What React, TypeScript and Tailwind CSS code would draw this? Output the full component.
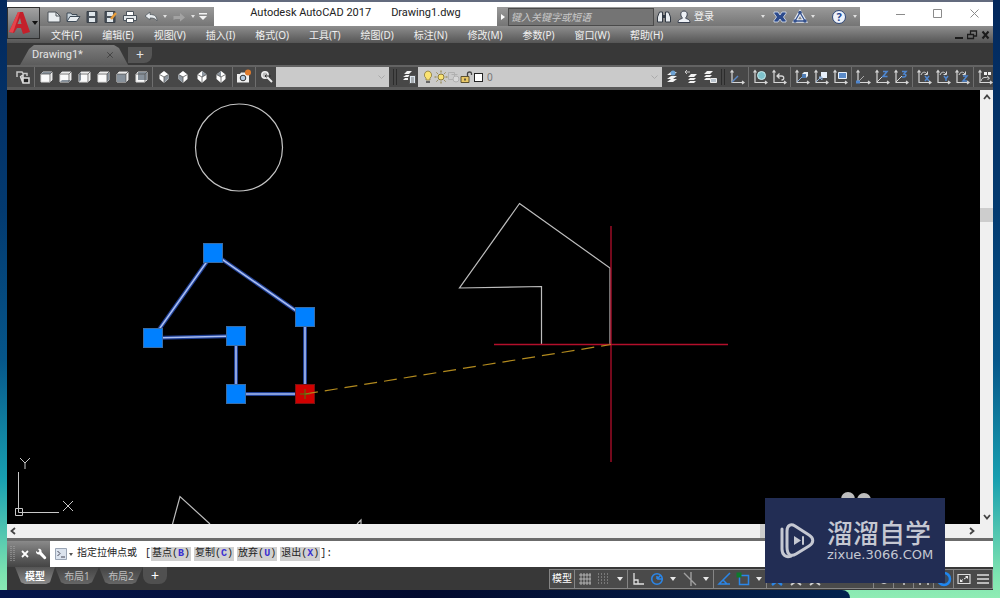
import React from 'react'
import { FiX } from 'react-icons/fi';

interface iconProps {
    children: React.ReactNode;
    className?: string;
}

const Icon: React.FC<iconProps> = ({ children, className }) => (
    <svg width="16" height="16" viewBox="0 0 16 16" fill="none" aria-hidden="true" className={className ?? "shrink-0"}>
        {children}
    </svg>
)

interface toolProps {
    label: string;
    children: React.ReactNode;
}

const Tool: React.FC<toolProps> = ({ label, children }) => (
    <button type="button" aria-label={label} className="flex h-full w-[19px] shrink-0 items-center justify-center">
        <Icon>{children}</Icon>
    </button>
)

const Sep = () => (
    <span className="flex h-full w-1 shrink-0 justify-center">
        <span className="h-full w-px bg-[#6e6e6e]" />
    </span>
)

const Grip = () => (
    <span className="flex h-full w-2 shrink-0 justify-center gap-0.5 py-0.5">
        <span className="w-px bg-[#2c2c2c]" />
        <span className="w-px bg-[#2c2c2c]" />
    </span>
)

const Caret = () => (
    <svg width="6" height="4" viewBox="0 0 6 4" aria-hidden="true" className="shrink-0">
        <path d="M0 0h6L3 4z" fill="#e8e8e8" />
    </svg>
)

const SmallCaret = () => (
    <svg width="6" height="3" viewBox="0 0 6 3" aria-hidden="true" className="shrink-0">
        <path d="M1 0h4L3 3z" fill="#e0e0e0" />
    </svg>
)

const Chevron = ({ d }: { d: string }) => (
    <svg width="8" height="8" viewBox="0 0 8 8" fill="none" aria-hidden="true">
        <path d={d} stroke="#444" strokeWidth="1.8" />
    </svg>
)

const menus = ["文件(F)", "编辑(E)", "视图(V)", "插入(I)", "格式(O)", "工具(T)", "绘图(D)", "标注(N)", "修改(M)", "参数(P)", "窗口(W)", "帮助(H)"];

const cubes = [
    { label: "俯视", face: "M3 5l2-2h9l-2 2z" },
    { label: "仰视", face: "M3 13l2-2h9l-2 2z" },
    { label: "左视", face: "M3 5l2-2v8l-2 2z" },
    { label: "右视", face: "M12 5l2-2v8l-2 2z" },
    { label: "前视", face: "M3 5h9v8H3z" },
    { label: "后视", face: "M5 3h9v8H5z" },
];

const isoViews = [
    { label: "西南等轴测", shade: "M8 8l4.500-2.500v4L8 14z" },
    { label: "东南等轴测", shade: "M3.500 5.500L8 8v6l-4.500-4z" },
    { label: "东北等轴测", shade: "M8 2l4.500 3.500L8 8z" },
    { label: "西北等轴测", shade: "M8 2L3.500 5.500 8 8z" },
];

const axisColor = "#d6d6d6";

const Axes = () => (
    <path d="M3 1.500V13.500H15M1.500 3.500L3 1.500l1.500 2M13 12l2 1.500-2 1.500" stroke={axisColor} strokeWidth="1.200" />
)

const rotations = [
    { label: "绕 X 轴旋转", d: "M9 7l4 5M13 7l-4 5" },
    { label: "绕 Y 轴旋转", d: "M9 7l2 2.500L13 7M11 9.500V12" },
    { label: "绕 Z 轴旋转", d: "M9 7h4l-4 5h4" },
];

const commandOptions = [
    { name: "基点", k: "B" },
    { name: "复制", k: "C" },
    { name: "放弃", k: "U" },
    { name: "退出", k: "X" },
];

// the shape being stretched, in drawing area pixels
const grips = [[206, 163], [298, 227], [298, 304], [229, 304], [229, 246], [146, 248]];

const TitleBar = () => (
    <div className="flex h-6 bg-white">
        <div className="mt-[5px] flex w-[174px] shrink-0 items-center gap-[3px] bg-linear-to-b from-[#9a9a9a] to-[#757575] pl-1.5">
            <button type="button" aria-label="新建">
                <Icon><path d="M2 3h8l4 4v6H2z" fill="#e9edf0" stroke="#4d5359" /><path d="M10 3v4h4" stroke="#4d5359" /></Icon>
            </button>
            <button type="button" aria-label="打开">
                <Icon><path d="M2 12V4h4l1 1.500h5V8" fill="#c9d4dc" stroke="#3f4b57" /><path d="M2 12.500L5 7.500h10l-3.500 5z" fill="#e9eef2" stroke="#3f4b57" /></Icon>
            </button>
            <button type="button" aria-label="保存">
                <Icon><path d="M3 2.500h10v11H3z" fill="#4b535c" stroke="#3a4149" /><path d="M5 3h6v4H5zM5 9h6v4H5z" fill="#dfe6eb" /></Icon>
            </button>
            <button type="button" aria-label="另存为">
                <Icon><path d="M2 2.500h10v11H2z" fill="#4b535c" stroke="#3a4149" /><path d="M4 3h6v4H4zM4 9h6v4H4z" fill="#dfe6eb" /><path d="M8 10l5-6" stroke="#e69b3a" strokeWidth="2.500" /></Icon>
            </button>
            <button type="button" aria-label="打印">
                <Icon><path d="M4.500 2.500h7V7h-7z" fill="#fff" stroke="#4b535c" /><path d="M1.500 6.500h13v5h-13z" fill="#e4e8eb" stroke="#4b535c" /><path d="M4.500 9.500h7v4h-7z" fill="#fff" stroke="#4b535c" /></Icon>
            </button>
            <button type="button" aria-label="放弃" className="ml-0.5">
                <Icon><path d="M2 7l5-4v2.500c5 0 7 2 7 6.500-1.500-2.500-3.500-3-7-3V11z" fill="#e9edf0" stroke="#535a61" strokeWidth=".8" /></Icon>
            </button>
            <SmallCaret />
            <button type="button" aria-label="重做">
                <Icon><path d="M2.500 11V7H9V4l5 4.500L9 12.500V10H6c-1.500 0-2.500 0-3.500 1z" fill="#a3a3a3" /></Icon>
            </button>
            <SmallCaret />
            <button type="button" aria-label="自定义快速访问工具栏">
                <svg width="8" height="8" viewBox="0 0 8 8" aria-hidden="true"><path d="M0 0h8v1.500H0zM0 3h8L4 7z" fill="#f2f2f2" /></svg>
            </button>
        </div>

        <h1 className="mt-[3px] flex flex-1 items-start justify-center gap-5 font-['Roboto',sans-serif] text-[11px] leading-4 whitespace-nowrap text-[#222]">
            <span>Autodesk AutoCAD 2017</span>
            <span>Drawing1.dwg</span>
        </h1>

        <div className="mt-[5px] flex w-[363px] shrink-0 items-center bg-linear-to-b from-[#9a9a9a] to-[#757575]">
            <button type="button" aria-label="收拢" className="flex w-[11px] justify-center">
                <svg width="4" height="6" viewBox="0 0 4 6" aria-hidden="true"><path d="M0 0v6l4-3z" fill="#fff" /></svg>
            </button>
            <input
                type="text"
                aria-label="搜索"
                placeholder="键入关键字或短语"
                className="h-[18px] w-[146px] border border-[#4a4a4a] bg-[#747474] px-0.5 text-[10px] italic placeholder:text-[#c9c9c9]"
            />
            <button type="button" aria-label="查找" className="ml-0.5">
                <Icon><path d="M3.500 3h3v10h-5V8zM12.500 3h-3v10h5V8z" fill="#e8ecf0" stroke="#333a44" /><path d="M6.500 6h3v3h-3z" fill="#333a44" /></Icon>
            </button>
            <button type="button" className="ml-1 flex items-center gap-0.5 text-[10px] text-[#f2f2f2]">
                <Icon><path d="M8 2c4 0 4 5 1.500 7 0 1 4.500.5 4.500 4.500H2C2 9.500 6.500 10 6.500 9 4 7 4 2 8 2z" fill="#eef1f6" stroke="#3a4150" /></Icon>
                登录
            </button>
            <span className="ml-auto"><SmallCaret /></span>
            <button type="button" aria-label="Exchange" className="ml-1.5">
                <Icon><path d="M2 3h4l2 3 2-3h4v1.500L11.500 8l2.500 3.500V13h-4l-2-3-2 3H2v-1.500L4.500 8 2 4.500z" fill="#2c4a8c" stroke="#dce4f2" strokeWidth=".8" /></Icon>
            </button>
            <button type="button" aria-label="A360" className="mr-0.5 ml-1">
                <Icon><path d="M8 3.500L3 12h10z" stroke="#e6ebf5" strokeWidth="3.500" /><path d="M8 3.500L3 12h10z" stroke="#33508c" strokeWidth="1.300" /><circle cx="8" cy="3.500" r="1.800" fill="#33508c" /><circle cx="3" cy="12" r="1.800" fill="#33508c" /><circle cx="13" cy="12" r="1.800" fill="#33508c" /></Icon>
            </button>
            <SmallCaret />
            <button type="button" aria-label="帮助" className="mr-1.5 ml-4 flex size-[14px] items-center justify-center rounded-full border border-[#2f4878] bg-[#eef2fb] text-[11px] leading-3 font-bold text-[#23458f]">?</button>
            <span className="mr-0.5"><SmallCaret /></span>
        </div>

        <div className="ml-[22px] flex shrink-0 items-center text-[#8b8b8b]">
            <button type="button" aria-label="最小化" className="flex w-[37px] justify-center">
                <svg width="10" height="10" aria-hidden="true"><path d="M0 5.500h9" stroke="currentColor" /></svg>
            </button>
            <button type="button" aria-label="最大化" className="flex w-[37px] justify-center">
                <svg width="10" height="10" fill="none" aria-hidden="true"><path d="M.5.5h8v8h-8z" stroke="currentColor" /></svg>
            </button>
            <button type="button" aria-label="关闭" className="flex w-[37px] justify-center">
                <svg width="10" height="10" aria-hidden="true"><path d="M.5.5l8 8M8.500.5l-8 8" stroke="currentColor" /></svg>
            </button>
        </div>
    </div>
)

const MenuBar = () => (
    <nav className="flex h-[17px] items-center pl-[11px] text-[10px] leading-4 text-[#f0f0f0]">
        <div className="flex gap-5">
            {menus.map((m) => (
                <button type="button" key={m} className="whitespace-nowrap">{m}</button>
            ))}
        </div>
        <div className="mr-[3px] ml-auto flex items-center gap-[3px] text-[#1c1c1c]">
            <button type="button" aria-label="最小化图形">
                <svg width="10" height="10" aria-hidden="true"><path d="M1 8h8" stroke="currentColor" strokeWidth="2" /></svg>
            </button>
            <button type="button" aria-label="还原图形">
                <svg width="11" height="10" fill="none" aria-hidden="true"><path d="M.5 4.500h6v4h-6zM3.500 4V1h6v5H7" stroke="currentColor" strokeWidth="1.300" /></svg>
            </button>
            <button type="button" aria-label="关闭图形">
                <svg width="9" height="10" aria-hidden="true"><path d="M1.500 1.500l6 7M7.500 1.500l-6 7" stroke="currentColor" strokeWidth="2" /></svg>
            </button>
        </div>
    </nav>
)

const Toolbar = () => (
    <div className="flex h-[25px] overflow-hidden border-t-2 border-b-3 border-t-[#636363] border-b-[#595959] bg-[#474747] pl-1.5">
        <Tool label="视图管理器">
            <path d="M2 8V3h5l1 1.500h4V7" stroke="#c8c8c8" strokeWidth="1.500" />
            <path d="M5 8l3-2v8M6 9h8v5H8z" stroke="#dcdcdc" strokeWidth="1.500" />
            <path d="M9 10h4v3H9z" fill="#222" />
        </Tool>
        <Sep />
        {cubes.map((c) => (
            <Tool key={c.label} label={c.label}>
                <path d="M3 5l2-2h9v8l-2 2H3z" fill="#fafafa" stroke="#ddd" />
                <path d={c.face} fill="#87919b" />
                <path d="M3 5h9v8M12 5l2-2" stroke="#555" strokeWidth=".8" />
            </Tool>
        ))}
        <Sep />
        {isoViews.map((v) => (
            <Tool key={v.label} label={v.label}>
                <path d="M8 2l4.500 3.500v4.500L8 14l-4.500-4V5.500z" fill="#fff" />
                <path d={v.shade} fill="#8c959e" />
                <path d="M3.500 5.500L8 8l4.500-2.500M8 8v6" stroke="#555" strokeWidth=".8" />
            </Tool>
        ))}
        <Sep />
        <Tool label="创建相机">
            <path d="M1 5h3l1-1.500h4L10 5h3v8.500H1z" fill="#f0f0f0" />
            <circle cx="7" cy="9" r="2.800" fill="#b7cbe0" stroke="#333" />
            <circle cx="12" cy="3.500" r="3" fill="#e07b2c" />
        </Tool>
        <Sep />
        <Tool label="缩放上一个">
            <circle cx="6" cy="6" r="3.200" fill="#bbb" stroke="#eee" strokeWidth="1.500" />
            <path d="M8 8l5 5" stroke="#eee" strokeWidth="2" />
            <path d="M6 7h6M7.500 5.500L6 7l1.500 1.500" stroke="#333" />
        </Tool>
        <div className="relative w-[113px] shrink-0">
            <select aria-label="视图" className="size-full appearance-none bg-[#cacaca]" defaultValue="">
                <option value=""></option>
            </select>
            <svg width="7" height="5" fill="none" aria-hidden="true" className="pointer-events-none absolute top-2 right-1"><path d="M.5.5l3 3 3-3" stroke="#aaa" /></svg>
        </div>
        <span className="w-0.5 shrink-0" />
        <Grip />
        <Tool label="图层特性管理器">
            <path d="M3 5l3-3h5L8 5zM2 8l3-2h4L7 8zM2 11l2-2h3v2z" fill="#f2f2f2" />
            <path d="M8.500 6.500h6v8h-6z" fill="#dce6ef" stroke="#555" />
            <path d="M10 9h3M10 11h3M10 13h3" stroke="#555" strokeWidth=".8" />
        </Tool>
        <div className="flex w-[244px] shrink-0 items-center bg-[#cacaca] pl-0.5">
            <Icon className="-mr-[3px] shrink-0">
                <path d="M8 2a4 4 0 0 1 2 7.200V11H6V9.200A4 4 0 0 1 8 2z" fill="#fbe372" stroke="#8a7a3a" strokeWidth=".8" />
                <path d="M6 12h4v2H6z" fill="#666" />
            </Icon>
            <Icon className="-mr-[3px] shrink-0">
                <circle cx="8" cy="8" r="3" fill="#fbe372" stroke="#8a7a3a" />
                <path d="M8 1.500v2M8 12.500v2M1.500 8h2M12.500 8h2M3.500 3.500l1.200 1.200M11.300 11.300l1.200 1.200M12.500 3.500l-1.200 1.200M4.700 11.300l-1.200 1.200" stroke="#8a7a3a" />
            </Icon>
            <Icon className="-mr-[3px] shrink-0">
                <path d="M2.500 3.500h6v7h-6zM5.500 5.500h6" stroke="#b0b0b0" />
                <circle cx="10" cy="10" r="3" fill="#d8d8d8" stroke="#b0b0b0" />
            </Icon>
            <Icon className="-mr-[3px] shrink-0">
                <path d="M2 7.500h8v6H2z" fill="#e9c765" stroke="#5c5230" />
                <path d="M8.500 7V4.500c0-2 4-2 4 0V6" stroke="#444" strokeWidth="1.300" />
                <path d="M6 9.500v2" stroke="#333" strokeWidth="1.500" />
            </Icon>
            <span className="mx-0.5 size-[9px] shrink-0 border border-[#222] bg-white" />
            <div className="relative flex h-full flex-1">
                <select aria-label="图层" className="size-full appearance-none pl-0.5 text-[10px] leading-4 text-[#777]">
                    <option>0</option>
                </select>
                <svg width="7" height="5" fill="none" aria-hidden="true" className="pointer-events-none absolute top-2 right-1"><path d="M.5.5l3 3 3-3" stroke="#aaa" /></svg>
            </div>
        </div>
        <Tool label="将对象的图层置为当前">
            <path d="M3 6l4-3h6l-4 3zM3 10l4-3h6l-4 3zM3 13l4-3h6l-4 3z" fill="#f2f2f2" />
            <circle cx="9" cy="4" r="2.500" fill="#6ea3d4" />
        </Tool>
        <Tool label="上一个图层">
            <path d="M5 8l3-3h6l-3 3zM5 11l2-2h6l-2 2zM5 14l2-2h6l-2 2z" fill="#f2f2f2" />
            <path d="M2 3h5M4 1L2 3l2 2" stroke="#c8c8c8" />
        </Tool>
        <Tool label="图层状态管理器">
            <path d="M2 5l3-3h6L8 5zM2 8l2-2h6L8 8zM2 11l2-2h4v2z" fill="#f2f2f2" />
            <path d="M8.500 9.500h6v4h-6z" fill="#b8c2cc" stroke="#eee" />
        </Tool>
        <Grip />
        <Tool label="UCS"><Axes /><path d="M3 13L9 7" stroke="#5b87c4" strokeWidth="1.500" /></Tool>
        <Sep />
        <Tool label="世界"><Axes /><circle cx="9.500" cy="6.500" r="4" fill="#7fc3cc" stroke="#c8ecee" /></Tool>
        <Tool label="上一个 UCS"><Axes /><path d="M6 7h4.500c3 0 3 4 0 4M8.500 4.500L6 7l2.500 2.500" stroke={axisColor} strokeWidth="1.300" /></Tool>
        <Sep />
        <Tool label="面 UCS"><Axes /><path d="M8 5l2-2h4v4l-2 2H8z" fill="#e8eef4" /><path d="M8 5h4v4H8z" fill="#4f7db5" /><path d="M3 13l5-5" stroke="#8fb0d8" /></Tool>
        <Tool label="对象"><Axes /><path d="M8 3h6v6H8z" fill="#e8f0fa" /><path d="M3 13l5-5M6 8h3v3z" stroke="#8fb0d8" /></Tool>
        <Tool label="视图 UCS"><Axes /><path d="M6.500 3.500h8v6h-8z" fill="#5b8bc9" stroke="#e8f0fa" /></Tool>
        <Sep />
        <Tool label="原点"><Axes /><path d="M3 13l6-6" stroke="#aaa" /><path d="M1 11.500h4v3H1z" fill="#4f86cf" /></Tool>
        <Tool label="Z 轴矢量"><Axes /><path d="M3 13l6-6" stroke={axisColor} /><path d="M9 2.500h4l-4 5h4.500" stroke="#4f86cf" strokeWidth="1.600" /></Tool>
        <Tool label="三点"><Axes /><path d="M3 13l6-6" stroke={axisColor} /><path d="M9 2.500h4L11 5c3 0 2.500 3.500-2 3" stroke="#4f86cf" strokeWidth="1.600" /></Tool>
        <Sep />
        {rotations.map((r) => (
            <Tool key={r.label} label={r.label}>
                <Axes />
                <path d="M5 6c1-3 4-4 6-1M11.500 2.500V5.500H8.500" stroke={axisColor} />
                <path d={r.d} stroke="#4f86cf" strokeWidth="1.500" />
            </Tool>
        ))}
        <Sep />
        <Tool label="应用"><Axes /><path d="M7 3h3v3H7zM11 3h3v3h-3z" fill="#eee" /><path d="M4 12c1-4 4-4 8-3M10 7l2.500 2-2 2" stroke={axisColor} /></Tool>
    </div>
)

const DrawingArea = () => (
    <main className="relative min-w-0 flex-1 bg-black">
        <svg className="absolute inset-0 size-full" fill="none" aria-label="图形">
            <circle cx="232" cy="57.500" r="43.500" stroke="#c4c4c4" strokeWidth="1.200" />

            <path d="M512.500 113.500L603 178V254.500H534.500V196.500L452.500 198z" stroke="#bdbdbd" strokeWidth="1.200" />
            <path d="M165 436L173 406.500 203 434M350 434l4-4v4" stroke="#bdbdbd" strokeWidth="1.200" />
            <path d="M487 254.500H721M604 136V372" stroke="#b30f2b" strokeWidth="1.300" />

            <path d="M206 163L298 227V304H229V246L146 248z" stroke="#1f3f94" strokeWidth="4" />
            <path d="M206 163L298 227V304H229V246L146 248z" stroke="#a9bdf0" strokeWidth="1.600" />
            {grips.map(([x, y], i) => (
                <rect key={i} x={x - 9.5} y={y - 9.5} width="19" height="19" fill={i === 2 ? "#d00000" : "#0080ff"} stroke={i === 2 ? "#7a1010" : "#3a6ea8"} />
            ))}
            <path d="M298 304L604 254.500" stroke="#b28a1e" strokeWidth="1.200" strokeDasharray="13 7" />
            <path d="M293 304h10M298 299v10" stroke="#4a7a10" />

            <circle cx="841" cy="409" r="7" fill="#bdbdbd" />
            <circle cx="857" cy="410" r="7" fill="#bdbdbd" />
        </svg>
        <svg width="72" height="70" fill="none" stroke="#c8c8c8" aria-hidden="true" className="absolute bottom-0 left-0">
            <path d="M8.500 54.500h7v7h-7zM11.500 18v40.500H52M13 4l5 5 5-5M18 9v6M56 47l10 10M66 47L56 57" />
        </svg>
    </main>
)

const Watermark = () => (
    <aside className="absolute right-[55px] bottom-[15px] flex h-[85px] w-[180px] items-center gap-2.5 bg-[#222d54] pl-3.5 text-[#c5c8d2]">
        <svg width="38" height="38" viewBox="0 0 38 38" fill="none" stroke="currentColor" strokeWidth="3" strokeLinecap="round" aria-hidden="true" className="shrink-0">
            <path d="M3 7v20c0 6 4 9 9 7" />
            <path d="M8 25V9c0-6 4-7.500 8-5l14 9c5 3 5 8 0 11l-13 8c-5 3-9 1-9-7z" />
            <path d="M15 14v9l7-4.500z" fill="currentColor" stroke="none" />
            <path d="M24 15v7" strokeWidth="2" />
        </svg>
        <div>
            <p className="text-[26px] leading-7 font-medium whitespace-nowrap">溜溜自学</p>
            <p className="font-['DejaVu_Sans',sans-serif] text-[13px] leading-4">zixue.3066.COM</p>
        </div>
    </aside>
)

const StatusSep = () => <span className="h-full w-px shrink-0 bg-[#858585]" />

const StatusBar = () => (
    <div className="flex h-5 w-[444px] shrink-0 items-center border border-[#858585] bg-[#4a4a4a]">
        <button type="button" className="w-6 text-[10px] whitespace-nowrap text-white">模型</button>
        <StatusSep />
        <Tool label="栅格"><path d="M4 2v12M7 2v12M10 2v12M13 2v12M2 4h12M2 8h12M2 12h12" stroke="#c9c9c9" strokeWidth=".8" /></Tool>
        <Tool label="捕捉"><path d="M2 3h12M2 6h12M2 9h12M2 12h12" stroke="#a8a8a8" strokeDasharray="1 2" /></Tool>
        <button type="button" aria-label="捕捉设置" className="flex w-[14px] justify-center"><Caret /></button>
        <StatusSep />
        <Tool label="正交"><path d="M4 2v11h10M4 9h4v4" stroke="#e0e0e0" strokeWidth="1.300" /></Tool>
        <Tool label="极轴追踪"><circle cx="8" cy="8" r="5.300" stroke="#2b86e8" strokeWidth="1.600" /><path d="M8 8h6M8 8l4-4M8 5v3" stroke="#2b86e8" strokeWidth="1.500" /></Tool>
        <button type="button" aria-label="极轴设置" className="flex w-[14px] justify-center"><Caret /></button>
        <Tool label="等轴测草图"><path d="M2 2l12 12M9 1v14" stroke="#a0a0a0" strokeWidth="1.400" /></Tool>
        <button type="button" aria-label="等轴测设置" className="flex w-[14px] justify-center"><Caret /></button>
        <StatusSep />
        <Tool label="对象捕捉追踪"><path d="M14 2L3 13h11M7 9l4 4" stroke="#2b86e8" strokeWidth="1.500" /></Tool>
        <Tool label="对象捕捉"><path d="M4.500 4.500h9v9h-9z" stroke="#2b86e8" strokeWidth="1.500" /><path d="M1.500 1.500h5v5h-5z" fill="#0d7a2c" /></Tool>
        <button type="button" aria-label="对象捕捉设置" className="flex w-[14px] justify-center"><Caret /></button>
        <StatusSep />
        <Tool label="注释可见性"><path d="M8 2v8L3 14M8 10l5 4" stroke="#2b86e8" strokeWidth="2.500" /></Tool>
        <Tool label="自动缩放"><path d="M8 2v8L3 14M8 10l5 4" stroke="#d0d0d0" strokeWidth="2" /></Tool>
        <Tool label="注释比例"><path d="M8 2v8L3 14M8 10l5 4" stroke="#d0d0d0" strokeWidth="2" /></Tool>
        <span className="flex-1" />
        <StatusSep />
        <Tool label="切换工作空间"><circle cx="8" cy="8" r="4" stroke="#d0d0d0" strokeWidth="2" /></Tool>
        <StatusSep />
        <Tool label="注释监视器"><path d="M8 2v12M2 8h12" stroke="#d0d0d0" strokeWidth="1.500" /></Tool>
        <StatusSep />
        <Tool label="隔离对象"><path d="M4 14V4h8v10" stroke="#d0d0d0" strokeWidth="1.500" /></Tool>
        <StatusSep />
        <Tool label="硬件加速"><circle cx="8" cy="8" r="6" fill="#3a4a60" stroke="#1f86f0" strokeWidth="2.500" /></Tool>
        <StatusSep />
        <Tool label="全屏显示"><path d="M2 3.500h12v9H2z" stroke="#ddd" strokeWidth="1.200" /><path d="M9 5h3v3zM4 8v3h3z" fill="#eee" /><path d="M8 8l3-2M5 10l2-1.500" stroke="#eee" /></Tool>
        <Tool label="自定义"><path d="M2 4h12M2 8h12M2 12h12" stroke="#e0e0e0" strokeWidth="1.500" /></Tool>
    </div>
)

export default function App() {
    return (
        <div className="relative flex min-h-screen flex-col bg-[linear-gradient(to_bottom,#03285c_0%,#033a70_35%,#06568a_60%,#189fb0_80%,#7de3b0_96%,#8fecb4_100%)] pr-[7px] pb-2 pl-[7px] font-['Noto_Sans','Noto_Sans_CJK_SC',sans-serif]">
            {/* desktop strip under the window */}
            <div className="absolute right-0 bottom-0 left-0 flex h-2">
                <span className="w-[85%] rounded-tr-full bg-linear-to-r from-[#04154a] via-[#020a2e] to-[#03234f]" />
            </div>

            <header className="flex border-t-2 border-[#636b7e] bg-[linear-gradient(to_bottom,#fff_24px,#8e8e8e_24px,#555_41px)]">
                <button type="button" aria-label="应用程序菜单" className="mt-[5px] flex h-8 w-[33px] shrink-0 items-center justify-center gap-px border border-[#2f2f2f] bg-linear-to-b from-[#a2a2a2] to-[#5f6264]">
                    <svg width="22" height="24" viewBox="0 0 22 24" aria-hidden="true">
                        <path d="M9 1h5l7 20-7 2-2-6H8l-3 5-5-1zM11 7l-2.500 6h4z" fillRule="evenodd" fill="#c4202b" />
                        <path d="M9 1h2L4 21.800l-4-.8z" fill="#e5434b" />
                    </svg>
                    <svg width="6" height="4" aria-hidden="true"><path d="M0 0h6L3 4z" fill="#111" /></svg>
                </button>
                <div className="min-w-0 flex-1">
                    <TitleBar />
                    <MenuBar />
                </div>
            </header>

            <div className="flex h-[22px] items-end bg-[#383838] pl-[13px] text-[#e4e4e4]">
                <div className="flex h-5 w-[108px] items-center bg-linear-to-b from-[#7c7c7c] to-[#5c5c5c] pl-3 [clip-path:polygon(0_100%,9px_4px,14px_0,94px_0,99px_3px,108px_100%)]">
                    <button type="button" className="font-['Roboto',sans-serif] text-[11px] leading-4">Drawing1*</button>
                    <button type="button" aria-label="关闭选项卡" className="mr-[13px] ml-auto text-[10px] text-[#3c3c3c]"><FiX /></button>
                </div>
                <button type="button" aria-label="新图形" className="mb-0.5 flex h-4 w-6 items-center justify-center rounded-br-lg bg-[#555] text-[14px] leading-4">+</button>
            </div>

            <Toolbar />

            <div className="flex min-h-[300px] flex-1">
                <DrawingArea />
                <div className="flex w-[13px] shrink-0 flex-col bg-[#f0f0f0]">
                    <button type="button" aria-label="向上滚动" className="flex h-[14px] items-center justify-center"><Chevron d="M1 6l3-3.500L7 6" /></button>
                    <span className="flex-[104]" />
                    <span className="h-[14px] bg-[#cdcdcd]" />
                    <span className="flex-[288]" />
                    <button type="button" aria-label="向下滚动" className="flex h-[14px] items-center justify-center"><Chevron d="M1 2l3 3.500L7 2" /></button>
                </div>
            </div>
            <div className="flex h-[14px] bg-[#f0f0f0]">
                <button type="button" aria-label="向左滚动" className="flex w-3 items-center justify-center"><Chevron d="M6 1L2.500 4 6 7" /></button>
                <span className="flex-[741]" />
                <span className="w-[110px] bg-[#cdcdcd]" />
                <span className="flex-[94]" />
                <button type="button" aria-label="向右滚动" className="mr-[13px] flex w-4 items-center justify-center"><Chevron d="M2 1l3.500 3L2 7" /></button>
            </div>

            <div className="flex h-[29px] border-t-3 border-[#6b6b6b] bg-white">
                <div className="flex w-[43px] items-center gap-1.5 bg-linear-to-b from-[#8a8a8a] to-[#444] pl-[3px]">
                    <svg width="5" height="16" aria-hidden="true"><path d="M1 0v16M4 0v16" stroke="#aaa" strokeDasharray="1 1" /></svg>
                    <button type="button" aria-label="关闭命令行">
                        <svg width="8" height="8" aria-hidden="true"><path d="M1 1l6 6M7 1L1 7" stroke="#fff" strokeWidth="1.800" /></svg>
                    </button>
                    <button type="button" aria-label="自定义命令行">
                        <svg width="12" height="12" viewBox="0 0 12 12" aria-hidden="true"><path d="M1 3l2 1.500L4.500 3 3 1c2-1 4 .5 3.500 3L11 9c1 1-1 3-2 2L4.500 6.500C2.500 7 .5 5 1 3z" fill="#fff" /></svg>
                    </button>
                </div>
                <div className="flex flex-1 items-center pl-[5px] font-['Liberation_Mono','Noto_Sans_CJK_SC',monospace] text-[10px] leading-4 whitespace-nowrap text-[#222]">
                    <button type="button" aria-label="最近使用的命令" className="mr-1 flex items-center gap-0.5">
                        <svg width="12" height="12" fill="none" aria-hidden="true"><path d="M.5.5h11v11H.5z" fill="#dbe3ee" stroke="#9aa5b5" /><path d="M2.500 3L5 5.500 2.500 8M6 9h4" stroke="#445" /></svg>
                        <svg width="4" height="3" aria-hidden="true"><path d="M0 0h4L2 3z" fill="#555" /></svg>
                    </button>
                    <span>指定拉伸点或</span>
                    <span className="ml-2">[</span>
                    <span className="flex gap-[3px]">
                        {commandOptions.map((o) => (
                            <button type="button" key={o.k} className="bg-[#d0d0d0] px-px leading-[14px]">
                                {o.name}(<span className="font-bold text-[#3a2fd0]">{o.k}</span>)
                            </button>
                        ))}
                    </span>
                    <span>]:</span>
                </div>
            </div>

            <footer className="flex h-[23px] items-center justify-between bg-[#383838]">
                <div className="flex h-full items-start pl-2 text-[10px] leading-4 text-[#bdbdbd]">
                    <button type="button" className="h-[17px] w-10 bg-linear-to-b from-[#555] to-[#8c8c8c] font-bold text-white [clip-path:polygon(0_0,100%_0,35px_90%,31px_100%,10px_100%,6px_90%)]">模型</button>
                    <button type="button" className="h-[17px] w-11 bg-linear-to-b from-[#444] to-[#666] [clip-path:polygon(0_0,100%_0,37px_90%,33px_100%,10px_100%,6px_90%)]">布局1</button>
                    <button type="button" className="h-[17px] w-11 bg-linear-to-b from-[#444] to-[#666] [clip-path:polygon(0_0,100%_0,37px_90%,33px_100%,10px_100%,6px_90%)]">布局2</button>
                    <button type="button" aria-label="新布局" className="h-[17px] w-6 rounded-b-lg bg-[#505050] text-[14px] text-white">+</button>
                </div>
                <StatusBar />
            </footer>

            <Watermark />
        </div>
    )
}
